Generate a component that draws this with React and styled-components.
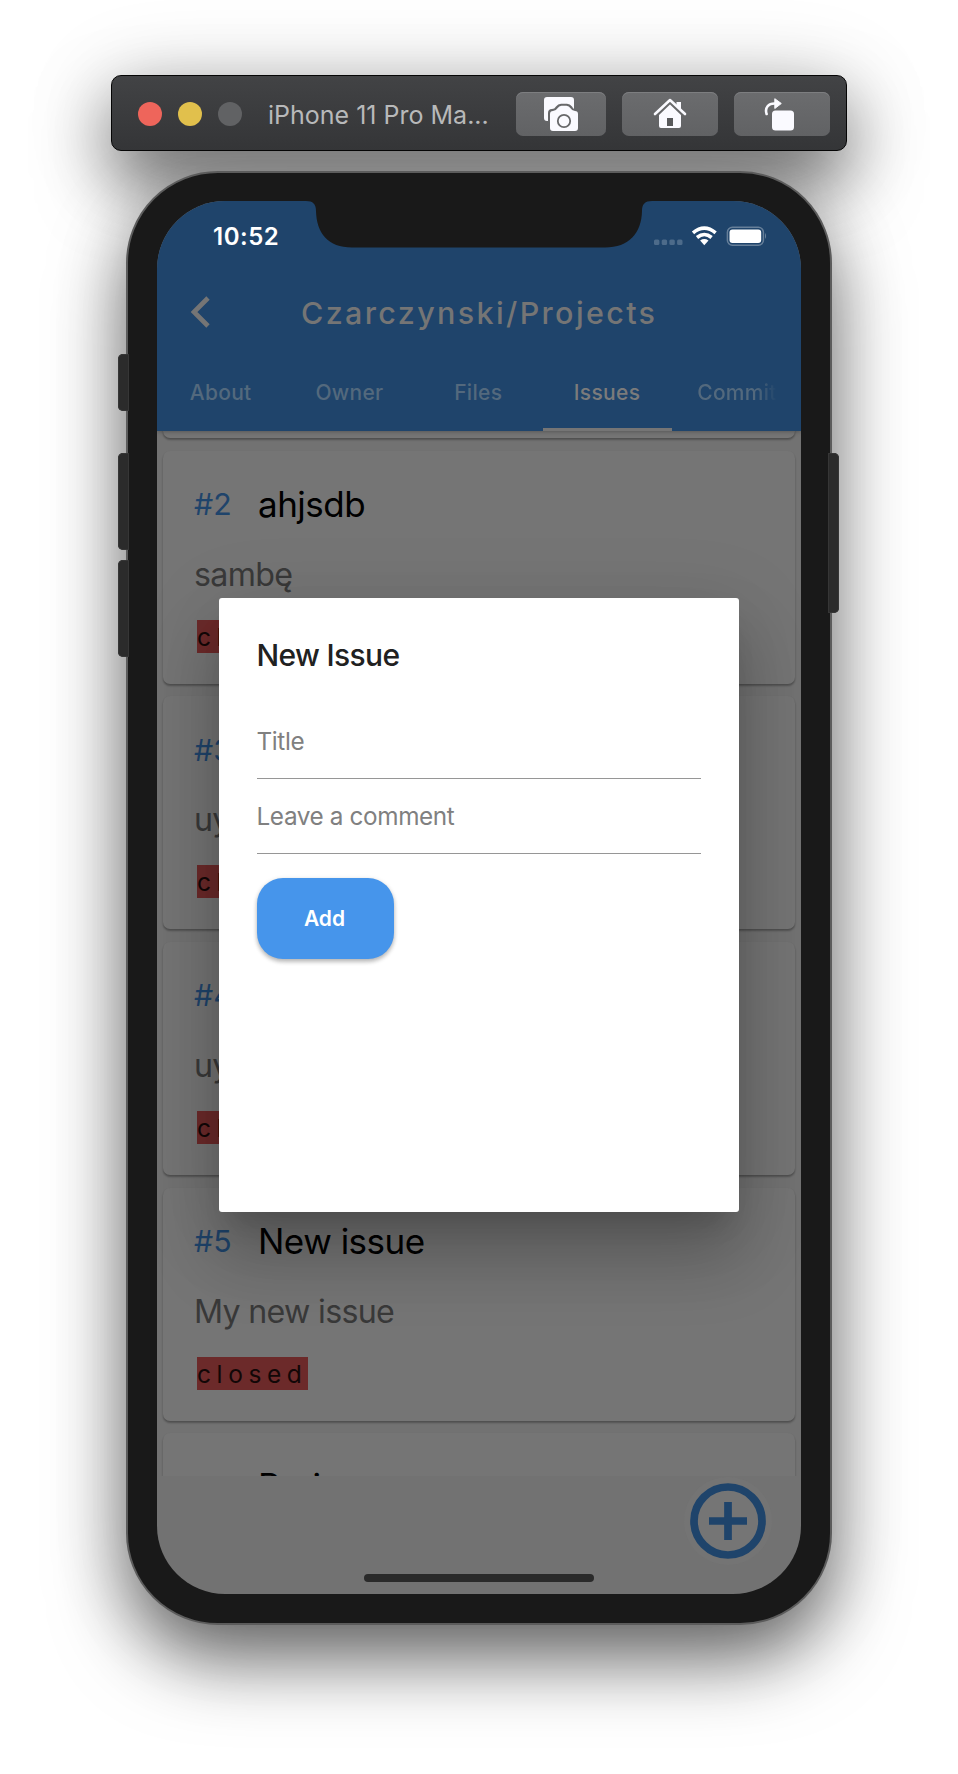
import React from "react";
import styled, { createGlobalStyle, css } from "styled-components";

const Global = createGlobalStyle`
  * { box-sizing: border-box; }
  body { margin: 0; background: #fff; font-family: Inter, "Liberation Sans", sans-serif; }
`;

const Stage = styled.main`
  position: relative;
  z-index: 0;
  width: 958px;
  height: 1774px;
  padding-top: 75px;
  display: flex;
  flex-direction: column;
  align-items: center;
  overflow: hidden;
`;

const windowShadow = css`
  &::before {
    content: "";
    position: absolute;
    z-index: -1;
    inset: 0;
    border-radius: inherit;
    box-shadow: ${(p) => p.$shadow};
  }
`;

const TitleBar = styled.header`
  position: relative;
  flex: none;
  width: 736px;
  height: 76px;
  display: flex;
  align-items: center;
  padding: 1px 16px 0 26px;
  border: 1px solid #050505;
  border-radius: 10px;
  background: linear-gradient(#424345, #343537);
  ${windowShadow}
`;

const Lights = styled.div`
  display: flex;
  gap: 16px;
`;

const Light = styled.span`
  width: 24px;
  height: 24px;
  border-radius: 50%;
  background: ${(p) => p.$color};
`;

const WindowTitle = styled.h1`
  flex: 1;
  margin: 2px 0 0 26px;
  font-size: 25px;
  font-weight: 400;
  line-height: 32px;
  color: #b8b9ba;
  white-space: nowrap;
`;

const Tools = styled.div`
  display: flex;
  gap: 16px;
`;

const ToolButton = styled.button`
  width: ${(p) => p.$width}px;
  height: 44px;
  padding: 0 ${(p) => p.$shift || 0}px 0 0;
  border: 0;
  border-radius: 7px;
  display: flex;
  align-items: center;
  justify-content: center;
  background: linear-gradient(#6b6c6e, #616264);
  box-shadow: inset 0 1px 0 #7d7e80;
`;

const Phone = styled.section`
  position: relative;
  flex: none;
  width: 706px;
  height: 1454px;
  margin-top: 20px;
  padding: 28px 29px;
  border: 2px solid #5c5c5c;
  border-radius: 92px;
  background: #191919;
  ${windowShadow}
`;

const SideKey = styled.i`
  position: absolute;
  top: ${(p) => p.$top}px;
  ${(p) => (p.$right ? css`right: -9px;` : css`left: -10px;`)}
  width: 11px;
  height: ${(p) => p.$height}px;
  border-radius: ${(p) => (p.$right ? "0 5px 5px 0" : "5px 0 0 5px")};
  background: #2b2b2b;
  box-shadow: inset 0 0 0 1px #363636;
`;

const Screen = styled.div`
  position: relative;
  width: 644px;
  height: 1393px;
  display: flex;
  flex-direction: column;
  overflow: hidden;
  border-radius: 68px;
  background: #727272;
`;

const Notch = styled.svg`
  position: absolute;
  top: -1px;
  left: 149px;
`;

const AppHeader = styled.div`
  position: relative;
  z-index: 1;
  flex: none;
  height: 230px;
  display: flex;
  flex-direction: column;
  background: #1f446b;
  box-shadow: 0 1px 4px rgba(0, 0, 0, 0.25);
`;

const StatusBar = styled.div`
  height: 67px;
  display: flex;
  justify-content: space-between;
  padding: 20px 35px 0 56px;
`;

const Clock = styled.span`
  margin-top: 1px;
  font-size: 24px;
  font-weight: 600;
  line-height: 30px;
  letter-spacing: 0.5px;
  color: #fff;
`;

const StatusGroup = styled.span`
  display: block;
  margin-top: 5px;
`;

const NavBar = styled.div`
  height: 87px;
  display: flex;
  align-items: center;
  padding: 1px 0 0 33px;
`;

const NavTitle = styled.h2`
  margin: 1px 0 0 90px;
  font-size: 30.5px;
  font-weight: 500;
  line-height: 40px;
  letter-spacing: 2.35px;
  color: #757575;
  white-space: nowrap;
`;

const Tabs = styled.nav`
  height: 76px;
  display: flex;
`;

const Tab = styled.a`
  flex: none;
  width: 128.8px;
  padding: 24px ${(p) => (p.$faded ? "24px 0 25px" : "1.5px 0 0")};
  text-align: ${(p) => (p.$faded ? "left" : "center")};
  font-size: 21px;
  font-weight: 500;
  line-height: 28px;
  letter-spacing: 0.3px;
  color: ${(p) => (p.$active ? "#7b7b7b" : "#53697d")};
  border-bottom: 3px solid ${(p) => (p.$active ? "#757575" : "transparent")};
`;

const FadeText = styled.span`
  display: block;
  overflow: hidden;
  white-space: nowrap;
  mask-image: linear-gradient(90deg, #000 74%, transparent);
`;

const List = styled.div`
  height: 1044.7px;
  padding: 0 6px;
  overflow: hidden;
`;

const Card = styled.article`
  height: 233px;
  margin-bottom: 12.7px;
  padding-left: 31px;
  border-radius: 7px;
  background: #757575;
  box-shadow: 0 2px 2px rgba(0, 0, 0, 0.24), 0 1px 2px rgba(0, 0, 0, 0.1);
  &:first-child { margin-top: -226.2px; }
`;

const CardHead = styled.div`
  display: flex;
  align-items: baseline;
  padding-top: 29px;
  height: 79px;
`;

const IssueNumber = styled.span`
  width: 64px;
  font-size: 30.3px;
  position: relative;
  top: -1.5px;
  color: #1f446b;
`;

const IssueTitle = styled.h3`
  margin: 0;
  font-size: 35px;
  font-weight: 400;
  line-height: 48px;
  letter-spacing: -0.5px;
  color: #000;
`;

const Body = styled.p`
  margin: 0;
  height: 90px;
  padding-top: 25px;
  font-size: 32.2px;
  line-height: 40px;
  letter-spacing: -0.7px;
  color: #393939;
`;

const Badge = styled.span`
  display: inline-block;
  margin-left: 3px;
  height: 33px;
  width: 111px;
  font-size: 24.5px;
  line-height: 34px;
  letter-spacing: 5.6px;
  white-space: nowrap;
  color: #120707;
  background: #6c2a2a;
`;

const Fab = styled.button`
  position: absolute;
  right: 35.5px;
  bottom: 35.5px;
  width: 76px;
  height: 76px;
  padding: 0;
  border: 0;
  border-radius: 50%;
  background: #757575;
  box-shadow: 0 0 0 6px #747474;
`;

const HomeIndicator = styled.i`
  position: absolute;
  left: 207px;
  bottom: 12px;
  width: 230px;
  height: 8px;
  border-radius: 4px;
  background: #2a2a2a;
`;

const Dialog = styled.form`
  position: absolute;
  z-index: 2;
  left: 62px;
  top: 397.3px;
  width: 520px;
  height: 613.7px;
  padding: 37.5px 38px 0 37.5px;
  border-radius: 3px;
  background: #fff;
  box-shadow: 0 20px 26px -12px rgba(0, 0, 0, 0.14), 0 44px 68px 4px rgba(0, 0, 0, 0.2), 0 16px 80px 12px rgba(0, 0, 0, 0.08);
`;

const DialogTitle = styled.h2`
  margin: 0 0 35px;
  font-size: 30px;
  font-weight: 500;
  line-height: 38px;
  letter-spacing: -0.65px;
  color: #212121;
`;

const Field = styled.div`
  height: ${(p) => p.$height}px;
  display: flex;
  align-items: flex-end;
  padding-bottom: 21px;
  border-bottom: 1.5px solid #969696;
  font-size: 24.3px;
  line-height: 32px;
  letter-spacing: -0.38px;
  color: #808080;
`;

const AddButton = styled.button`
  width: 137px;
  height: 81px;
  margin-top: 24px;
  padding: 0 1px 0 0;
  border: 0;
  border-radius: 26px;
  background: #4695eb;
  color: #fff;
  font: 600 21px Inter, "Liberation Sans", sans-serif;
  box-shadow: 0 3px 4px rgba(0, 0, 0, 0.22), 0 1px 5px rgba(0, 0, 0, 0.12);
`;

const issues = [
  { id: 1, title: "", body: "" },
  { id: 2, title: "ahjsdb", body: "sambę" },
  { id: 3, title: "uyg", body: "uyg" },
  { id: 4, title: "uyg", body: "uyg" },
  { id: 5, title: "New issue", body: "My new issue" },
  { id: 6, title: "Proj", body: "" },
];

const CameraIcon = () => (
  <svg width="36" height="36" viewBox="-1 -1 36 36">
    <path fill="#fafaff" d="M3 0H27Q30 0 30 3V13H6V24H3Q0 24 0 21V3Q0 0 3 0Z" />
    <path fill="#67686a" d="M4 25V16Q4 12 8 12Q10.500 12 12 9.500Q14 6.800 17 6.800H23Q26 6.800 28 9.500Q29 12 31 12V25Z" />
    <path fill="#fafaff" d="M9 14Q12 14 13.500 11.300Q15 8.800 17.500 8.800H22.500Q25 8.800 26.500 11.300Q28 14 31 14Q34 14 34 17V31Q34 34 31 34H9Q6 34 6 31V17Q6 14 9 14Z" />
    <circle cx="20" cy="24" r="6.200" fill="none" stroke="#67686a" strokeWidth="1.800" />
  </svg>
);

const HomeIcon = () => (
  <svg width="34" height="31" viewBox="0 0 34 31">
    <path fill="none" stroke="#fafaff" strokeWidth="2.6" strokeLinecap="round" strokeLinejoin="round" d="M2 16 17 2 32 16" />
    <path fill="#fafaff" d="M23.500 4H28V12L23.500 8ZM17 6.500 28 17V28Q28 30 26 30H8Q6 30 6 28V17Z" />
    <path fill="#58595b" d="M14 20H20V28H14Z" />
  </svg>
);

const RotateIcon = () => (
  <svg width="30" height="34" viewBox="0 0 30 34">
    <path fill="none" stroke="#fafaff" strokeWidth="2.600" strokeLinecap="round" d="M2.600 17C0.500 10.500 4.500 6.300 11 6.500" />
    <path fill="#fafaff" stroke="#fafaff" strokeLinejoin="round" d="M10.800 1.700 17.300 6.500 10.800 11.500Z" />
    <rect x="8" y="13.500" width="22" height="20" rx="3.500" fill="#fafaff" />
  </svg>
);

const StatusIcons = () => (
  <svg width="112" height="24" viewBox="0 0 112 24">
    {[0, 7.7, 15.4, 23.1].map((x) => (
      <rect key={x} x={x} y="13.500" width="5.400" height="5.400" rx="1.500" fill="#4d6b8a" />
    ))}
    <g transform="translate(-0.700 0.300)">
      <g fill="none" stroke="#fff" strokeWidth="3.600">
        <path d="M39.700 6.600Q51 -2.800 62.300 6.600" />
        <path d="M43.700 11.200Q51 5.200 58.300 11.200" />
      </g>
      <path fill="#fff" d="M46.800 14.200Q51 11.400 55.200 14.200L51 19Z" />
    </g>
    <rect x="73.400" y="1.200" width="36" height="18" rx="5" fill="none" stroke="#667f99" strokeWidth="1.500" />
    <rect x="75.500" y="3.500" width="31.700" height="13.500" rx="3" fill="#fff" />
    <path fill="#667f99" d="M111 7Q113.500 10 111 13Z" />
  </svg>
);

export default function App() {
  return (
    <>
      <Global />
      <Stage>
        <TitleBar $shadow="0 32px 70px rgba(0, 0, 0, 0.56), 0 10px 90px rgba(0, 0, 0, 0.2)">
          <Lights>
            <Light $color="#ee655b" />
            <Light $color="#e1c04c" />
            <Light $color="#616264" />
          </Lights>
          <WindowTitle>iPhone 11 Pro Ma...</WindowTitle>
          <Tools>
            <ToolButton $width={90} aria-label="Screenshot"><CameraIcon /></ToolButton>
            <ToolButton $width={96} aria-label="Home"><HomeIcon /></ToolButton>
            <ToolButton $width={96} $shift={7} aria-label="Rotate"><RotateIcon /></ToolButton>
          </Tools>
        </TitleBar>
        <Phone $shadow="0 36px 74px rgba(0, 0, 0, 0.58), 0 10px 80px rgba(0, 0, 0, 0.13)">
          <SideKey $top={181} $height={57} />
          <SideKey $top={280} $height={97} />
          <SideKey $top={387} $height={97} />
          <SideKey $right $top={280} $height={160} />
          <Screen>
            <AppHeader>
              <Notch width="346" height="48" viewBox="0 0 346 48">
                <path fill="#191919" d="M0 0H346V1C339 1 336 4 336 11C335.500 33 323 47.500 299 47.500H46C22 47.500 10.500 33 10 11C10 4 7 1 0 1Z" />
              </Notch>
              <StatusBar>
                <Clock>10:52</Clock>
                <StatusGroup><StatusIcons /></StatusGroup>
              </StatusBar>
              <NavBar>
                <svg width="21" height="32" viewBox="0 0 21 32">
                  <path d="M18 2 4 16 18 30" fill="none" stroke="#757575" strokeWidth="4.700" />
                </svg>
                <NavTitle>Czarczynski/Projects</NavTitle>
              </NavBar>
              <Tabs>
                <Tab>About</Tab>
                <Tab>Owner</Tab>
                <Tab>Files</Tab>
                <Tab $active>Issues</Tab>
                <Tab $faded><FadeText>Commits</FadeText></Tab>
              </Tabs>
            </AppHeader>
            <List>
              {issues.map((issue) => (
                <Card key={issue.id}>
                  <CardHead>
                    <IssueNumber>#{issue.id}</IssueNumber>
                    <IssueTitle>{issue.title}</IssueTitle>
                  </CardHead>
                  <Body>{issue.body}</Body>
                  <Badge>closed</Badge>
                </Card>
              ))}
            </List>
            <Fab aria-label="New issue">
              <svg width="76" height="76" viewBox="0 0 76 76" fill="none" stroke="#1f446b" strokeWidth="7.700">
                <circle cx="38" cy="38" r="34" />
                <path d="M38 19V57M19 38H57" />
              </svg>
            </Fab>
            <HomeIndicator />
            <Dialog>
              <DialogTitle>New Issue</DialogTitle>
              <Field $height={70}>Title</Field>
              <Field $height={75}>Leave a comment</Field>
              <AddButton type="button">Add</AddButton>
            </Dialog>
          </Screen>
        </Phone>
      </Stage>
    </>
  );
}
